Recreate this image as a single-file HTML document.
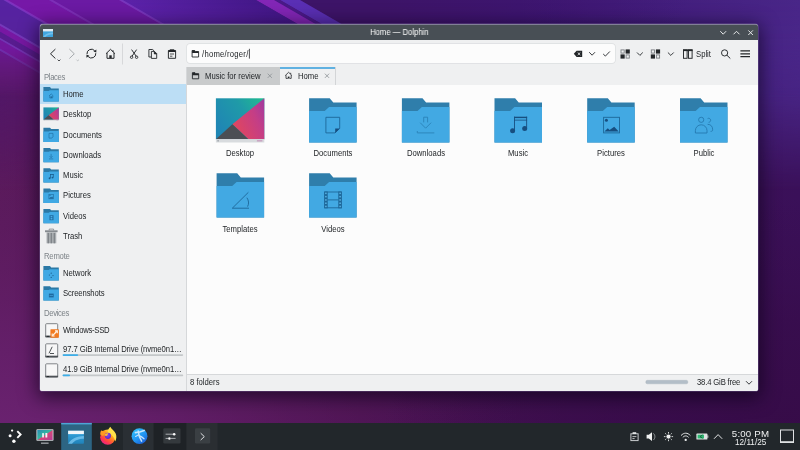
<!DOCTYPE html>
<html>
<head>
<meta charset="utf-8">
<title>Home — Dolphin</title>
<style>
html,body{margin:0;padding:0;}
body{width:800px;height:450px;overflow:hidden;position:relative;background:#45145e;font-family:"Liberation Sans",sans-serif;font-size:7.7px;color:#232629;}
.abs{position:absolute;}
#wall{position:absolute;left:0;top:0;width:800px;height:450px;}
#win{position:absolute;left:39.5px;top:24px;width:718.6px;height:366.6px;border-radius:3px 3px 2.5px 2.5px;overflow:hidden;background:#eff0f1;box-shadow:0 0 0 0.6px rgba(150,130,190,0.5),0 4px 18px 3px rgba(8,0,20,0.62);}
#title{position:absolute;left:0;top:0;width:719px;height:16px;background:#484f55;box-shadow:inset 0 1px 0 rgba(185,175,215,0.5);border-radius:3px 3px 0 0;}
#title .t{position:absolute;left:0;width:718.6px;top:4.25px;text-align:center;color:#fcfcfc;font-size:8.2px;line-height:9px;transform:scaleX(0.939);}
#toolbar{position:absolute;left:0;top:16px;width:719px;height:26.5px;background:#eff0f1;border-bottom:0.8px solid #d3d5d7;}
#url{position:absolute;left:147px;top:20px;width:428px;height:19px;background:#fcfcfc;border-radius:3px;box-shadow:0 0 0 0.7px #dcdee0;}
#side{position:absolute;left:0;top:43px;width:146.5px;height:324px;background:#eff0f1;border-right:0.8px solid #d6d8da;}
#tabs{position:absolute;left:147px;top:43px;width:572px;height:17.5px;background:#eff0f1;border-bottom:0.7px solid #d3d5d7;}
#tab1{position:absolute;left:0;top:0;width:93.5px;height:17.5px;background:#c9cbcc;}
#tab2{position:absolute;left:93.5px;top:0;width:55px;height:18.5px;background:#eff0f1;border-right:0.7px solid #d3d5d7;}
#tab2:before{content:"";position:absolute;left:0;top:0.3px;width:100%;height:1.7px;background:#60b1e1;}
#view{position:absolute;left:147.3px;top:61px;width:572px;height:289.5px;background:#fcfcfc;}
#status{position:absolute;left:147.3px;top:350.1px;width:572px;height:17px;background:#eff0f1;border-top:0.7px solid #d6d8da;}
.lbl{position:absolute;white-space:nowrap;line-height:10px;font-size:8.2px;transform:scaleX(0.939);transform-origin:left center;}
.sec{color:#7d8388;}
.c{text-align:center;width:90px;transform-origin:center center;}
#sel{position:absolute;left:0;top:60px;width:146.5px;height:20.3px;background:#bcdef5;}
#panel{position:absolute;left:0;top:423px;width:800px;height:27px;background:#22272b;}
.w{color:#eff0f1;}
#L{position:absolute;left:0;top:0;width:800px;height:450px;will-change:transform;}
#title .t{will-change:transform;}
</style>
</head>
<body>
<svg id="wall" viewBox="0 0 800 450">
<defs>
<linearGradient id="wg" x1="0" y1="0" x2="1" y2="0">
<stop offset="0" stop-color="#5a1a5b"/><stop offset="0.45" stop-color="#48124f"/><stop offset="1" stop-color="#3a1059"/>
</linearGradient>
<linearGradient id="wtc" x1="0" y1="0" x2="1" y2="0">
<stop offset="0" stop-color="#5b23a6"/><stop offset="0.2" stop-color="#6a1ca2"/><stop offset="0.36" stop-color="#4a1680"/><stop offset="0.44" stop-color="#3d1468"/><stop offset="0.65" stop-color="#3d1672"/><stop offset="1" stop-color="#492688"/>
</linearGradient>
<linearGradient id="fadeL" x1="0" y1="0" x2="0" y2="1">
<stop offset="0" stop-color="#fff"/><stop offset="0.5" stop-color="#fff" stop-opacity="0.9"/><stop offset="1" stop-color="#fff" stop-opacity="0"/>
</linearGradient>
<linearGradient id="fadeH" x1="0" y1="0" x2="1" y2="0">
<stop offset="0" stop-color="#fff" stop-opacity="0.52"/><stop offset="0.5" stop-color="#fff" stop-opacity="0.6"/><stop offset="1" stop-color="#fff" stop-opacity="1"/>
</linearGradient>
<mask id="mtop"><rect x="0" y="0" width="800" height="450" fill="#000"/><rect x="0" y="0" width="800" height="190" fill="url(#fadeL)"/></mask>
<mask id="mtop2"><rect x="0" y="0" width="800" height="450" fill="#000"/><rect x="0" y="0" width="800" height="98" fill="url(#fadeL)"/></mask>
<radialGradient id="wbl" gradientUnits="userSpaceOnUse" cx="0" cy="450" r="520" gradientTransform="translate(0 450) scale(1 0.62) translate(0 -450)">
<stop offset="0" stop-color="#6c2372" stop-opacity="1"/><stop offset="0.35" stop-color="#66206c" stop-opacity="0.75"/><stop offset="1" stop-color="#5a1a5c" stop-opacity="0"/>
</radialGradient>
<radialGradient id="wbr2" gradientUnits="userSpaceOnUse" cx="800" cy="450" r="420" gradientTransform="translate(800 450) scale(1 0.6) translate(-800 -450)">
<stop offset="0" stop-color="#360b46" stop-opacity="0.95"/><stop offset="0.5" stop-color="#360b46" stop-opacity="0.6"/><stop offset="1" stop-color="#360b46" stop-opacity="0"/>
</radialGradient>
<linearGradient id="wlm" x1="0" y1="0" x2="1" y2="0"><stop offset="0" stop-color="#4c1470" stop-opacity="0.55"/><stop offset="1" stop-color="#4c1470" stop-opacity="0"/></linearGradient>
<linearGradient id="fadeM" x1="0" y1="0" x2="0" y2="1"><stop offset="0" stop-color="#fff" stop-opacity="0"/><stop offset="0.3" stop-color="#fff" stop-opacity="1"/><stop offset="0.55" stop-color="#fff" stop-opacity="0.7"/><stop offset="1" stop-color="#fff" stop-opacity="0"/></linearGradient>
<mask id="mlm"><rect x="0" y="60" width="200" height="130" fill="url(#fadeM)"/></mask>
<linearGradient id="sdk" gradientUnits="userSpaceOnUse" x1="330" y1="0" x2="600" y2="0"><stop offset="0" stop-color="#3d1468" stop-opacity="1"/><stop offset="1" stop-color="#3d1470" stop-opacity="0"/></linearGradient>
<linearGradient id="sb1" x1="0" y1="0" x2="0" y2="1"><stop offset="0" stop-color="#44188a"/><stop offset="1" stop-color="#5c22aa"/></linearGradient>
<linearGradient id="wtr2" x1="0" y1="0" x2="1" y2="0"><stop offset="0" stop-color="#3d1672" stop-opacity="0"/><stop offset="0.4" stop-color="#3f1a76" stop-opacity="0.8"/><stop offset="1" stop-color="#492688" stop-opacity="1"/></linearGradient>
<linearGradient id="wbr" x1="0" y1="0" x2="0" y2="1"><stop offset="0" stop-color="#360b47" stop-opacity="0"/><stop offset="1" stop-color="#360b47" stop-opacity="0.9"/></linearGradient>
</defs>
<rect width="800" height="450" fill="url(#wg)"/>
<rect x="0" y="100" width="560" height="350" fill="url(#wbl)"/>
<rect x="350" y="180" width="450" height="270" fill="url(#wbr2)"/>
<g mask="url(#mlm)"><rect x="0" y="60" width="200" height="130" fill="url(#wlm)"/></g>
<g mask="url(#mtop)"><rect x="380" y="0" width="420" height="200" fill="url(#wtr2)"/></g>
<g mask="url(#mtop2)"><rect x="0" y="0" width="800" height="120" fill="url(#wtc)"/>
<g transform="rotate(30 0 0)">
<rect x="-50" y="-500" width="1100" height="350" fill="url(#sdk)"/>
<rect x="-50" y="-150" width="600" height="10" fill="#6038c8" opacity="0.75"/>
<rect x="-50" y="-140" width="600" height="3" fill="#4a1a88"/>
<rect x="-50" y="-137" width="600" height="9" fill="#8a28bc" opacity="0.9"/>
<rect x="-50" y="-128" width="600" height="68" fill="url(#sb1)"/>
<rect x="-50" y="-61.4" width="600" height="2.4" fill="#9a50d8" opacity="0.43"/>
<rect x="-50" y="-59.4" width="600" height="34.4" fill="#6b1aa4"/>
<rect x="-50" y="-26.4" width="600" height="2.4" fill="#9a4ad4" opacity="0.43"/>
<rect x="-50" y="-24.4" width="600" height="22" fill="#7618a8"/>
<rect x="-50" y="-3.8" width="600" height="2.6" fill="#8c4ad6" opacity="0.50"/>
<rect x="-50" y="-1.6" width="600" height="23" fill="#5623a2"/>
<rect x="-50" y="20.4" width="600" height="2.4" fill="#9a58e0" opacity="0.46"/>
<rect x="-50" y="22.4" width="600" height="5" fill="#7a18a8"/>
<rect x="-50" y="27.4" width="600" height="5.6" fill="#581c94"/>
<rect x="-50" y="32.6" width="600" height="2.3" fill="#9550d8" opacity="0.43"/>
<rect x="-50" y="34.5" width="600" height="8" fill="#7418a4"/>
<rect x="-50" y="42.1" width="600" height="2.3" fill="#9048d0" opacity="0.40"/>
<rect x="-50" y="44" width="600" height="60" fill="#6a1896"/>
</g></g>
</svg>

<div id="win">
 <div id="title"><div class="t">Home — Dolphin</div></div>
 <div id="toolbar"></div>
 <div id="url"></div>
 <div id="side"><div id="sel" style="top:17px"></div></div>
 <div id="tabs"><div id="tab1"></div><div id="tab2"></div></div>
 <div id="view"></div>
 <div id="status"></div>
</div>

<div id="panel"></div>
<svg id="ico" class="abs" style="left:0;top:0" width="800" height="450" viewBox="0 0 800 450">
<defs>
<g id="bf"><path d="M0,0H20.6L24.2,4.2H47.5V44.2H0Z" fill="#2f7eab"/><path d="M0,12.6H15.6L20,8.6H47.5V44.2H0Z" fill="#42a9e3"/></g>
<g id="sf"><path d="M0,0H6.6L7.8,1.3H15.4V14.3H0Z" fill="#2b79a6"/><path d="M0,3.8H5.4L6.4,3.2H15.4V14.3H0Z" fill="#40a9e4"/></g>
<linearGradient id="dk1" x1="0" y1="0.6" x2="1" y2="0"><stop offset="0" stop-color="#1f86b4"/><stop offset="0.55" stop-color="#1f9aa8"/><stop offset="1" stop-color="#20bd8f"/></linearGradient>
<linearGradient id="dk2" x1="0" y1="0.6" x2="1" y2="0"><stop offset="0" stop-color="#e0465f"/><stop offset="0.6" stop-color="#c43e86"/><stop offset="1" stop-color="#9e3aa2"/></linearGradient>
<g id="dk"><rect x="0" y="0" width="48.4" height="41" fill="url(#dk1)"/><path d="M48.4,0V41H32.5L16.5,26Z" fill="url(#dk2)"/><path d="M0,41L16.5,26L32.5,41Z" fill="#4b4e54"/><rect x="0" y="40.8" width="48.4" height="3.4" fill="#d8dbde"/><rect x="1.5" y="41.8" width="1.4" height="1.4" fill="#9aa0a6"/><rect x="41" y="41.8" width="5.5" height="1.4" fill="#c9a0c0"/></g>
</defs>
<use href="#sf" x="43.4" y="87.1"/>
<use href="#sf" x="43.4" y="127.7"/>
<use href="#sf" x="43.4" y="148.0"/>
<use href="#sf" x="43.4" y="168.3"/>
<use href="#sf" x="43.4" y="188.6"/>
<use href="#sf" x="43.4" y="208.9"/>
<use href="#sf" x="43.4" y="266.1"/>
<use href="#sf" x="43.4" y="286.3"/>
<g transform="translate(43.4 107.4) scale(0.318 0.303)"><use href="#dk"/></g>
<use href="#dk" x="215.9" y="98.3"/>
<use href="#bf" x="309.1" y="98.3"/>
<use href="#bf" x="401.9" y="98.3"/>
<use href="#bf" x="494.5" y="98.3"/>
<use href="#bf" x="587.2" y="98.3"/>
<use href="#bf" x="680.0" y="98.3"/>
<use href="#bf" x="216.6" y="173.3"/>
<use href="#bf" x="309.1" y="173.3"/>

<!-- big emblems -->
<g fill="none" stroke="#1d6799" stroke-width="0.9">
<path d="M325.9,117.3 H339.7 V128.4 L335,132.9 H325.9 Z"/>
<path d="M423.7,122.4 V117.2 H427.6 V122.4 M420.2,122.7 L425.65,128.2 L431.1,122.7" stroke="#2a82b8"/>
<path d="M417.3,131 V132.9 H434.3" stroke="#2a82b8"/>
<rect x="603.6" y="117.3" width="15.9" height="15.6"/>
<circle cx="701.2" cy="119.8" r="2.6" stroke="#2579b0"/>
<path d="M695.4,133 V130.6 A5.8,5.8 0 0 1 707,130.6 V133 Z" stroke="#2579b0"/>
<path d="M707.6,118.6 A2,2 0 1 1 708.6,122.3 M707.6,124.3 C711,124.4 712.6,126.6 712.6,129.2 V130.2 C712.6,131 711.8,131.4 710.6,131.4" stroke="#2579b0"/>
<path d="M232.3,208.2 L248.4,192.3 M232.3,208.2 H249" />
<path d="M246.9,197.7 C248.7,200.5 249.2,203.5 247.6,206.6" />
<path d="M324.5,192 H341.5 M324.5,207.8 H341.5 M327.6,199.9 H338.4" stroke-width="0.9"/>
</g>
<path d="M335.2,128.5 H339.9 L335.2,133.1 Z" fill="#174f80"/>
<!-- music -->
<g fill="#174f80"><rect x="514.1" y="116.7" width="13" height="1.4"/><rect x="514.1" y="119.7" width="13" height="0.8"/><rect x="514.1" y="116.7" width="0.9" height="13.2"/><rect x="526.2" y="116.7" width="0.9" height="11"/><circle cx="512.6" cy="130.8" r="2.5"/><circle cx="524.7" cy="128.5" r="2.5"/></g>
<!-- pictures -->
<circle cx="606.4" cy="120.3" r="1.5" fill="#174f80"/>
<path d="M604.4,131.6 L607.8,128.2 L609.6,130 L614.2,126.8 L618.7,131.6 Z" fill="#174f80"/>
<!-- videos -->
<g fill="#1d6799"><rect x="324.1" y="191.5" width="3.6" height="16.8"/><rect x="338.3" y="191.5" width="3.6" height="16.8"/></g>
<g fill="#5db9ea"><rect x="325.2" y="192.6" width="1.4" height="1.5"/><rect x="325.2" y="195.9" width="1.4" height="1.5"/><rect x="325.2" y="199.2" width="1.4" height="1.5"/><rect x="325.2" y="202.5" width="1.4" height="1.5"/><rect x="325.2" y="205.7" width="1.4" height="1.5"/>
<rect x="339.4" y="192.6" width="1.4" height="1.5"/><rect x="339.4" y="195.9" width="1.4" height="1.5"/><rect x="339.4" y="199.2" width="1.4" height="1.5"/><rect x="339.4" y="202.5" width="1.4" height="1.5"/><rect x="339.4" y="205.7" width="1.4" height="1.5"/></g>
<!-- small emblems -->
<g fill="none" stroke="#2273a8" stroke-width="0.7">
<path d="M49,96 L51.2,93.9 L53.4,96 M49.8,95.6 V98 H52.6 V95.6"/>
<path d="M49,133.4 H53 V136.8 L51.8,138.1 H49 Z"/>
<path d="M51.1,153.9 V157.5 M49.6,156.2 L51.1,157.7 L52.6,156.2 M49,158.9 H53.2"/>
<rect x="48.9" y="194.4" width="4.5" height="4.4"/>
</g>
<rect x="50.7" y="96.3" width="1" height="1.7" fill="#1a5c8c"/>
<g fill="#1a5c8c"><g transform="translate(0 0.4)"><rect x="50" y="173.6" width="3.6" height="0.8"/><rect x="50" y="173.6" width="0.7" height="4"/><rect x="52.9" y="173.6" width="0.7" height="3.4"/><circle cx="49.6" cy="177.8" r="0.95"/><circle cx="52.5" cy="177.2" r="0.95"/></g>
<g transform="translate(0 0.5)"><path d="M49.2,198 L50.4,196.6 L51,197.2 L52.2,196 L53.2,198Z"/><circle cx="50" cy="195" r="0.5"/></g>
<g transform="translate(0 0.6)"><rect x="49.5" y="214.6" width="4" height="5" fill="#1f6aa0"/><rect x="50.6" y="215.3" width="1.8" height="1.5" fill="#49aee6"/><rect x="50.6" y="217.4" width="1.8" height="1.5" fill="#49aee6"/></g>
<circle cx="51.2" cy="273.2" r="0.6"/><circle cx="49.4" cy="275" r="0.6"/><circle cx="53" cy="275.6" r="0.6"/><circle cx="51.2" cy="277.4" r="0.6"/>
<rect x="48.9" y="293.6" width="4.8" height="3.8" fill="#1f6aa0"/><rect x="49.6" y="295.2" width="3.4" height="0.6" fill="#49aee6"/>
</g>
<!-- trash -->
<g transform="translate(0 0.3)">
<path d="M49.2,230 V228.8 H53.6 V230" fill="none" stroke="#7c8287" stroke-width="0.8"/>
<rect x="45" y="230" width="12.6" height="1.9" fill="#868b90"/>
<rect x="46.5" y="232" width="9.8" height="11" fill="#adb1b5"/>
<rect x="47.6" y="232.6" width="1.5" height="10.4" fill="#80858a"/><rect x="50.6" y="232.6" width="1.5" height="10.4" fill="#80858a"/><rect x="53.6" y="232.6" width="1.5" height="10.4" fill="#80858a"/>
</g>
<!-- drives -->
<g id="drv"><rect x="45.7" y="323.7" width="12" height="13.2" rx="0.8" fill="#f7f7f7" stroke="#74787c" stroke-width="0.9"/><rect x="45.3" y="335.6" width="12.8" height="1.7" fill="#4d5256"/><rect x="47" y="335.9" width="2" height="0.9" fill="#23272a"/></g>
<use href="#drv" y="20.1"/><use href="#drv" y="40.1"/>
<rect x="50.4" y="329.3" width="8.5" height="8.5" rx="0.6" fill="#f27a1f"/>
<path d="M56.8,331.2 L52.6,335.6" stroke="#fff3e6" stroke-width="1.3"/>
<path d="M55,330.9 H57.3 V333.2 M52.2,333.6 V336 H54.6" fill="none" stroke="#fff3e6" stroke-width="1.1"/>
<path d="M49,353.3 L52.2,346.8 M50,353.5 H54" fill="none" stroke="#3a3e42" stroke-width="0.9"/>
<!-- capacity bars -->
<rect x="62.6" y="354.2" width="120.6" height="1.7" rx="0.8" fill="#c4c7c9"/><rect x="62.6" y="354.2" width="15.6" height="1.7" rx="0.8" fill="#3daee9"/>
<rect x="62.6" y="374.5" width="120.6" height="1.7" rx="0.8" fill="#c4c7c9"/><rect x="62.6" y="374.5" width="7.4" height="1.7" rx="0.8" fill="#3daee9"/>
<!-- status -->
<rect x="645.8" y="380.3" width="42" height="3.5" rx="1.5" fill="#b3bec8" stroke="#a8b2bb" stroke-width="0.4"/>
<path d="M746,381.2 L749,384.2 L752,381.2" fill="none" stroke="#232629" stroke-width="0.9"/>
<!-- titlebar -->
<g id="tb">
<rect x="43" y="29" width="10" height="8" rx="0.6" fill="#3fa6e0"/><rect x="43" y="29" width="10" height="2.4" fill="#dfeaf3"/><path d="M43,37C46,33.5 49,32.8 53,32.6V34.2C49.5,34.4 47,35 45.2,37Z" fill="#7cc6ee" opacity="0.8"/>
<path d="M720.3,31.2 L723.2,34.2 L726.1,31.2" fill="none" stroke="#e8eaeb" stroke-width="1"/>
<path d="M733.5,34.3 L736.5,31.3 L739.5,34.3" fill="none" stroke="#e8eaeb" stroke-width="1"/>
<path d="M748.3,30.4 L752.9,35 M752.9,30.4 L748.3,35" fill="none" stroke="#e8eaeb" stroke-width="1"/>
</g>
<!-- toolbar left -->
<g fill="none" stroke="#232629" stroke-width="1" stroke-linejoin="miter">
<path d="M55.4,49.1 L50.5,53.8 L55.4,58.5"/>
<path d="M57.6,59.6 L59,61 L60.4,59.6" stroke-width="0.8"/>
<path d="M69.4,49.1 L74.3,53.8 L69.4,58.5" stroke="#a6aaad"/>
<path d="M76.4,59.6 L77.7,60.9 L79,59.6" stroke-width="0.8" stroke="#b4b8bb"/>
<path d="M87,54 A4.4,4.4 0 0 1 94.6,50.6"/>
<path d="M95.8,53.2 A4.4,4.4 0 0 1 88.2,56.6"/>
<path d="M106,53.7 L110.5,49.3 L115,53.7 M107,53 V58.3 H114 V53" />
<path d="M113,50.2 V52" stroke-width="0.9"/>
<path d="M122.5,43.5 V64.5" stroke="#d0d2d4" stroke-width="0.8"/>
<!-- cut -->
<path d="M131.6,49.6 L136.3,56.4 M136.6,49.6 L131.9,56.4" stroke-width="0.95"/>
<circle cx="131.6" cy="57.2" r="1.25" stroke-width="0.85"/><circle cx="136.6" cy="57.2" r="1.25" stroke-width="0.85"/>
<!-- copy -->
<path d="M151.2,57 H148.9 V49.5 H152.6 L154,50.8" stroke-width="0.9"/>
<path d="M151.4,51.4 H154.5 L156.7,53.6 V58.4 H151.4 Z" stroke-width="0.9"/>
<path d="M154.3,51.4 V53.9 H156.7" stroke-width="0.8"/>
<!-- paste -->
<path d="M168.4,50.6 H175.6 V58.3 H168.4 Z" stroke-width="0.95"/>
<path d="M170,54 H174 M170,56.2 H172.4" stroke-width="0.8"/>
</g>
<path d="M96.4,49.5 L93.5,51.5 L96.3,52.6 Z" fill="#232629"/>
<path d="M86.4,57.7 L89.3,55.7 L86.5,54.6 Z" fill="#232629"/>
<rect x="109.3" y="55.3" width="2.4" height="2.8" fill="#232629"/>
<path d="M154.2,51.2 L156.9,54 H154.2 Z" fill="#232629"/>
<path d="M169.8,49.3 H174.2 V51.4 H169.8 Z" fill="#232629"/>
<path d="M168.4,50.2 H175.6 V52 H168.4Z" fill="#232629"/>
<!-- url folder icon -->
<path d="M192.1,50.5 H194.7 L195.6,51.5 H198.6 V57 H192.1 Z" fill="none" stroke="#232629" stroke-width="0.9"/>
<path d="M192.1,50.5 H194.7 L195.6,51.5 H198.6 V53.1 H192.1Z" fill="#232629"/>
<path d="M249.4,48.8 V58.6" stroke="#232629" stroke-width="0.8"/>
<!-- url right -->
<path d="M573.8,53.8 L576.6,50.7 H582.2 V56.9 H576.6 Z" fill="#232629"/>
<path d="M577.7,52.5 L580.3,55.1 M580.3,52.5 L577.7,55.1" stroke="#fcfcfc" stroke-width="0.8"/>
<g fill="none" stroke="#232629" stroke-width="0.9">
<path d="M589.2,52.2 L592.1,55.2 L595,52.2"/>
<path d="M603.2,54 L605.4,56.1 L609.8,51.5"/>
<path d="M637,52.5 L639.9,55.4 L642.8,52.5"/>
<path d="M667.9,52.5 L670.8,55.4 L673.7,52.5"/>
</g>
<!-- view mode icons -->
<g id="vm1">
<rect x="621" y="49.9" width="3.2" height="3.2" fill="none" stroke="#7a7e82" stroke-width="0.9"/>
<rect x="625.6" y="49.4" width="4.2" height="4.2" fill="#232629"/>
<rect x="620.5" y="54.4" width="4.2" height="4.2" fill="#232629"/>
<rect x="626.1" y="54.9" width="3.2" height="3.2" fill="none" stroke="#7a7e82" stroke-width="0.9"/>
</g>
<use href="#vm1" x="30.3"/>
<!-- split -->
<g fill="none" stroke="#232629" stroke-width="0.95">
<rect x="683.5" y="49.9" width="3.6" height="8.4"/><rect x="688.5" y="49.9" width="3.6" height="8.4"/>
</g>
<rect x="683" y="49.4" width="9.6" height="1.7" fill="#232629"/>
<!-- search -->
<circle cx="724.6" cy="52.9" r="3.1" fill="none" stroke="#232629" stroke-width="0.95"/>
<path d="M726.9,55.2 L730.3,58.5" stroke="#232629" stroke-width="1"/>
<!-- hamburger -->
<path d="M740.4,50.9 H750 M740.4,53.8 H750 M740.4,56.7 H750" stroke="#232629" stroke-width="1.25"/>
<!-- tabs icons -->
<path d="M192.4,72.7 H195 L195.9,73.7 H198.7 V78.8 H192.4 Z" fill="none" stroke="#232629" stroke-width="0.9"/>
<path d="M192.4,72.7 H195 L195.9,73.7 H198.7 V75.2 H192.4Z" fill="#232629"/>
<path d="M267.7,73.7 L271.9,77.9 M271.9,73.7 L267.7,77.9" stroke="#8c9094" stroke-width="0.8"/>
<path d="M324.9,73.7 L329.1,77.9 M329.1,73.7 L324.9,77.9" stroke="#8c9094" stroke-width="0.8"/>
<path d="M285.2,75.6 L288.6,72.3 L292,75.6 M286,75.2 V78.4 H287.8 M289.6,78.4 H291.2 V75.2 M290.7,72.8 V74" fill="none" stroke="#232629" stroke-width="0.8"/>
<rect x="287.8" y="76.6" width="1.7" height="1.9" fill="#232629"/>

<!-- panel -->
<defs>
<linearGradient id="ffg" x1="0.85" y1="0.05" x2="0.2" y2="0.95"><stop offset="0" stop-color="#ffe94d"/><stop offset="0.3" stop-color="#ffb01f"/><stop offset="0.55" stop-color="#ff6a2a"/><stop offset="0.8" stop-color="#ff3456"/><stop offset="1" stop-color="#e8268a"/></linearGradient>
<radialGradient id="ffp" cx="0.45" cy="0.4" r="0.6"><stop offset="0" stop-color="#8a46f0"/><stop offset="1" stop-color="#5a2bc8"/></radialGradient>
<linearGradient id="kg" x1="0.2" y1="0.1" x2="0.8" y2="0.95"><stop offset="0" stop-color="#2fbdfb"/><stop offset="0.55" stop-color="#2193f0"/><stop offset="1" stop-color="#1b5fd8"/></linearGradient>
<linearGradient id="dg" x1="0" y1="0" x2="0" y2="1"><stop offset="0" stop-color="#36a6df"/><stop offset="1" stop-color="#2083ba"/></linearGradient>
<linearGradient id="sg" x1="0" y1="0" x2="1" y2="1"><stop offset="0" stop-color="#2a8bb5"/><stop offset="0.47" stop-color="#35b8a0"/><stop offset="0.53" stop-color="#d4487a"/><stop offset="1" stop-color="#b83c96"/></linearGradient>
</defs>
<rect x="123" y="423" width="30.8" height="27" fill="#2a2f34"/>
<rect x="153.8" y="423" width="32.6" height="27" fill="#1e2226"/>
<rect x="186.4" y="423" width="31.2" height="27" fill="#2a2e32"/>
<rect x="61.2" y="423" width="30.6" height="27" fill="#2d6583"/>
<rect x="61.2" y="422.9" width="30.6" height="1.5" fill="#4ea5d6"/>
<!-- launcher -->
<g fill="#fcfcfc"><circle cx="12.1" cy="430.6" r="1.15"/><circle cx="10.1" cy="435.8" r="1.5"/><circle cx="13.9" cy="441.2" r="1.7"/></g>
<path d="M17.3,431.2 L20.6,434.5 L17.3,437.8" fill="none" stroke="#fcfcfc" stroke-width="1.9"/>
<!-- settings/monitor -->
<rect x="36.4" y="429.2" width="17.1" height="11.6" rx="0.8" fill="#cfd3d6"/>
<rect x="37.3" y="430" width="15.3" height="10" fill="url(#sg)"/>
<rect x="42.2" y="433" width="1.7" height="4.6" rx="0.4" fill="#f4f6f7"/><rect x="45.4" y="433" width="1.9" height="4.6" rx="0.4" fill="#f4f6f7"/>
<rect x="41" y="442.6" width="7.6" height="1.1" fill="#b8bcc0"/>
<!-- dolphin -->
<rect x="68.1" y="430.7" width="15.8" height="13.1" rx="0.7" fill="url(#dg)"/>
<rect x="68.1" y="430.7" width="15.8" height="3.4" fill="#f2f6f9"/>
<path d="M68.1,443.8 C72,437.6 77.5,436.2 83.9,436 V438.8 C78.5,439 75,440 72,443.8 Z" fill="#7fcaf1" opacity="0.75"/>
<!-- firefox -->
<circle cx="107.8" cy="437.2" r="7.6" fill="url(#ffg)"/>
<path d="M107.6,432.4 C107.8,430 108.8,428.2 110.3,426.8 C111.4,429.2 114.6,430.6 115.8,433.8 C116.8,436.6 116.4,439.4 115.2,441.4 C114.8,437.6 112,434 107.6,432.4Z" fill="#ffe24a"/>
<path d="M100.2,434.6 C100.2,432.6 100.6,431.2 101.4,430.2 C102,431.2 102.8,431.4 103.4,430.6 C104,431.6 105.2,432 106.4,432.2 L103,436 Z" fill="#ff9a22"/>
<circle cx="107.9" cy="435.8" r="3.1" fill="url(#ffp)"/>
<path d="M104.4,435.4 C105,433.8 106.8,433 108.4,433.4 L106.6,436 Z" fill="#ffc428"/>
<path d="M103.8,437.4 C104.6,440.2 107.4,441.6 110.2,440.6 C108,442.6 103.6,441.6 103.8,437.4Z" fill="#ff4a3a" opacity="0.8"/>
<!-- K -->
<circle cx="139.5" cy="436.2" r="7.9" fill="url(#kg)"/>
<g fill="none" stroke="#e3f3ff" stroke-linecap="round" opacity="0.85">
<path d="M135.4,432.6 C138.4,432.4 141.4,431.6 144.2,430.4" stroke-width="1.6"/>
<path d="M138.2,431 C138.6,435 140,438.6 141.6,441.2" stroke-width="1.5"/>
<path d="M139.2,435.6 C141,436.2 142.6,437.4 144,438.8" stroke-width="1.3"/>
<path d="M135.6,436.4 L138.6,434.8" stroke-width="1.1"/>
</g>
<!-- sliders -->
<rect x="163.3" y="428.3" width="17.2" height="15.1" rx="1.2" fill="#34393d"/>
<path d="M165.6,434.2 H174.6 M165.6,438.4 H168 M171,438.4 H175.6" stroke="#c9cdd0" stroke-width="0.8"/>
<circle cx="174.2" cy="434.2" r="1.25" fill="#fcfcfc"/><circle cx="169.4" cy="438.4" r="1.25" fill="#fcfcfc"/>
<!-- terminal > -->
<rect x="195" y="428.3" width="15.2" height="15.1" rx="1.2" fill="#3a3f43"/>
<path d="M200.7,433.2 L204.3,436.6 L200.7,440" fill="none" stroke="#e0e2e4" stroke-width="1"/>
<!-- tray -->
<g fill="none" stroke="#e4e6e7" stroke-width="0.9">
<rect x="630.9" y="433.8" width="7.2" height="6.8" stroke="#d0d3d5" stroke-width="0.95"/>
<path d="M632.4,436.6 H636.4 M632.4,438.6 H634.6" stroke-width="0.8"/>
<path d="M653.4,433.4 C655.4,435.2 655.4,438.2 653.4,440" stroke="#9da1a4"/>
<path d="M668.5,432 V433.6 M668.5,439.6 V441.2 M663.9,436.6 H665.5 M671.5,436.6 H673.1 M665.2,433.3 L666.3,434.4 M670.7,438.8 L671.8,439.9 M665.2,439.9 L666.3,438.8 M670.7,434.4 L671.8,433.3" stroke-width="0.9"/>
<path d="M681,435.6 C683.8,432.4 687.6,432.4 690.4,435.6" stroke-width="1"/>
<path d="M682.8,437.4 C684.6,435.4 686.8,435.4 688.6,437.4" stroke-width="1"/>
<path d="M714,438.8 L718.1,434.6 L722.2,438.8" stroke-width="1"/>
<rect x="780.5" y="430" width="13" height="12.5" stroke="#dfe1e3" stroke-width="1"/>
</g>
<rect x="632.6" y="432.2" width="3.6" height="1.8" fill="#e4e6e7"/>
<path d="M646.6,434.8 H648.8 L652,432.2 V441 L648.8,438.4 H646.6 Z" fill="#f0f1f2"/>
<circle cx="668.5" cy="436.6" r="2.1" fill="#f0f1f2"/>
<circle cx="685.7" cy="439.9" r="1.15" fill="#f0f1f2"/>
<rect x="696.4" y="433.6" width="11" height="6" rx="0.6" fill="#dfe2e3"/><rect x="707.4" y="435.4" width="0.9" height="2.4" fill="#dfe2e3"/>
<rect x="697.6" y="434.7" width="6.4" height="3.8" fill="#2eb872"/>
<path d="M702.6,434.9 L700,436.6 L702.6,438.3" fill="none" stroke="#1c5c3c" stroke-width="0.9"/>
<rect x="780.5" y="441.2" width="13" height="1.8" fill="#dfe1e3"/>
</svg>

<div id="L">
<div class="lbl" style="left:202.0px;top:49.75px;letter-spacing:0.26px">/home/roger/</div>
<div class="lbl" style="left:696.0px;top:49.75px">Split</div>
<div class="lbl" style="left:204.9px;top:71.75px">Music for review</div>
<div class="lbl" style="left:297.5px;top:71.75px">Home</div>
<div class="lbl sec" style="left:43.6px;top:72.75px;letter-spacing:-0.37px">Places</div>
<div class="lbl sec" style="left:43.6px;top:251.75px;letter-spacing:-0.22px">Remote</div>
<div class="lbl sec" style="left:43.6px;top:308.75px;letter-spacing:-0.35px">Devices</div>
<div class="lbl" style="left:62.7px;top:89.75px">Home</div>
<div class="lbl" style="left:62.7px;top:109.75px">Desktop</div>
<div class="lbl" style="left:62.7px;top:130.75px">Documents</div>
<div class="lbl" style="left:62.7px;top:150.75px">Downloads</div>
<div class="lbl" style="left:62.7px;top:170.75px">Music</div>
<div class="lbl" style="left:62.7px;top:190.75px">Pictures</div>
<div class="lbl" style="left:62.7px;top:211.75px">Videos</div>
<div class="lbl" style="left:62.7px;top:231.75px">Trash</div>
<div class="lbl" style="left:62.7px;top:268.75px">Network</div>
<div class="lbl" style="left:62.7px;top:288.75px;letter-spacing:-0.13px">Screenshots</div>
<div class="lbl" style="left:62.7px;top:325.75px;letter-spacing:-0.32px">Windows-SSD</div>
<div class="lbl" style="left:62.9px;top:344.75px;letter-spacing:-0.1px">97.7 GiB Internal Drive (nvme0n1…</div>
<div class="lbl" style="left:62.9px;top:364.75px;letter-spacing:-0.1px">41.9 GiB Internal Drive (nvme0n1…</div>
<div class="lbl c" style="left:195.3px;top:148.75px">Desktop</div>
<div class="lbl c" style="left:287.9px;top:148.75px">Documents</div>
<div class="lbl c" style="left:380.6px;top:148.75px">Downloads</div>
<div class="lbl c" style="left:473.3px;top:148.75px">Music</div>
<div class="lbl c" style="left:566.0px;top:148.75px">Pictures</div>
<div class="lbl c" style="left:658.7px;top:148.75px">Public</div>
<div class="lbl c" style="left:195.3px;top:224.75px">Templates</div>
<div class="lbl c" style="left:287.9px;top:224.75px">Videos</div>
<div class="lbl" style="left:189.8px;top:377.75px">8 folders</div>
<div class="lbl" style="left:696.9px;top:377.75px;letter-spacing:-0.17px">38.4 GiB free</div>
<div class="lbl w" style="left:731.8px;top:428.25px;font-size:9.7px;letter-spacing:0.2px;line-height:11px;transform:none">5:00 PM</div>
<div class="lbl w" style="left:735px;top:437.75px;font-size:8.2px;line-height:10px;transform:none">12/11/25</div>
</div>
</body>
</html>
